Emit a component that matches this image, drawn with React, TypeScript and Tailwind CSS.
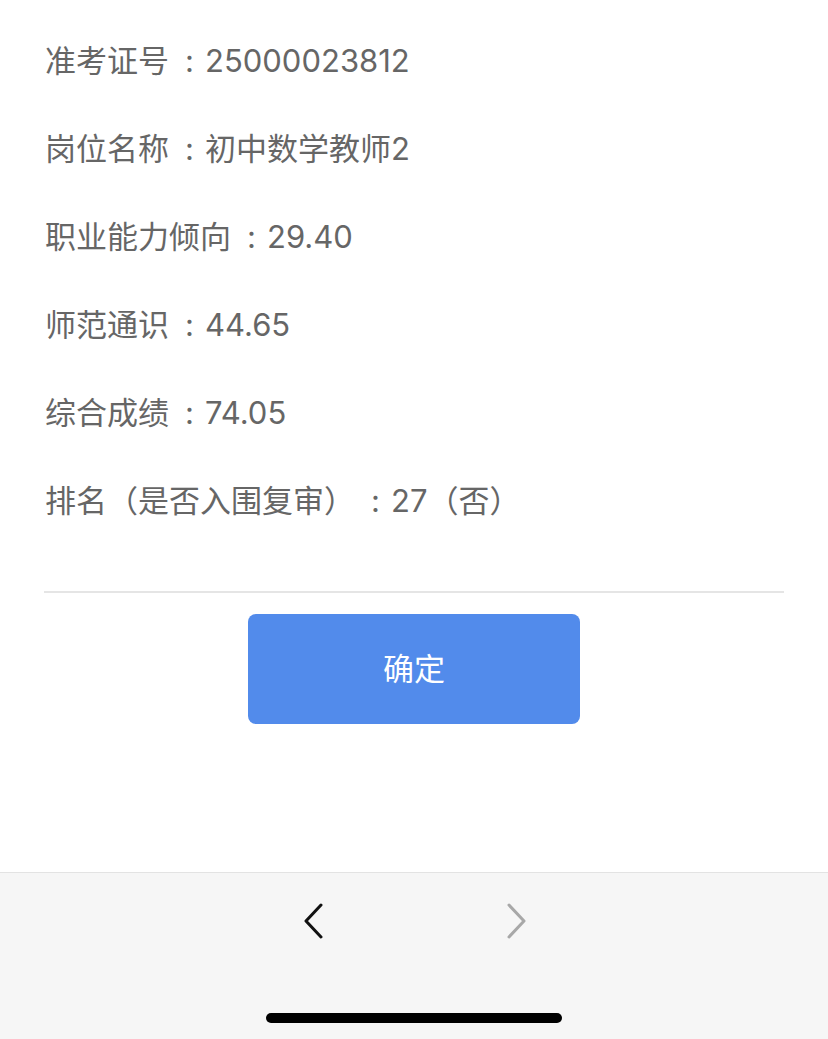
import React from "react";

const rows: [string, string][] = [
  ["准考证号", "25000023812"],
  ["岗位名称", "初中数学教师2"],
  ["职业能力倾向", "29.40"],
  ["师范通识", "44.65"],
  ["综合成绩", "74.05"],
  ["排名（是否入围复审）", "27（否）"],
];

export default function App() {
  return (
    <div
      className="flex h-[1039px] w-[828px] flex-col bg-white"
      style={{ fontFamily: 'Inter, "Noto Sans CJK SC", sans-serif' }}
    >
      <div className="flex-1">
        <div className="pl-[45px] pt-[17px]">
          {rows.map(([k, v]) => (
            <div key={k} className="flex h-[88px] items-center whitespace-pre text-[31px] text-[#666666]">
              <span>{k}</span>
              <span className="inline-block w-[36px] pl-[16px]">:</span>
              <span>{v}</span>
            </div>
          ))}
        </div>
        <div className="mx-[44px] mt-[46px] h-[2px] bg-[#e5e5e5]" />
        <div className="mt-[21px] flex justify-center">
          <button className="flex h-[110px] w-[332px] items-center justify-center rounded-[8px] bg-[#528beb] text-[31px] text-white">
            确定
          </button>
        </div>
      </div>
      <div className="relative h-[167px] border-t border-[#e3e3e3] bg-[#f6f6f6]">
        <div className="flex h-[96px] items-center justify-center gap-[184px] pl-[2px]">
          <svg width="20" height="36" viewBox="0 0 20 36" fill="none">
            <path d="M18 2 L3 18 L18 34" stroke="#111" strokeWidth="3" strokeLinecap="round" strokeLinejoin="round" />
          </svg>
          <svg width="20" height="36" viewBox="0 0 20 36" fill="none">
            <path d="M2 2 L17 18 L2 34" stroke="#a8a8a8" strokeWidth="3" strokeLinecap="round" strokeLinejoin="round" />
          </svg>
        </div>
        <div className="mt-[44px] flex justify-center">
          <div className="h-[10px] w-[296px] rounded-full bg-black" />
        </div>
      </div>
    </div>
  );
}
